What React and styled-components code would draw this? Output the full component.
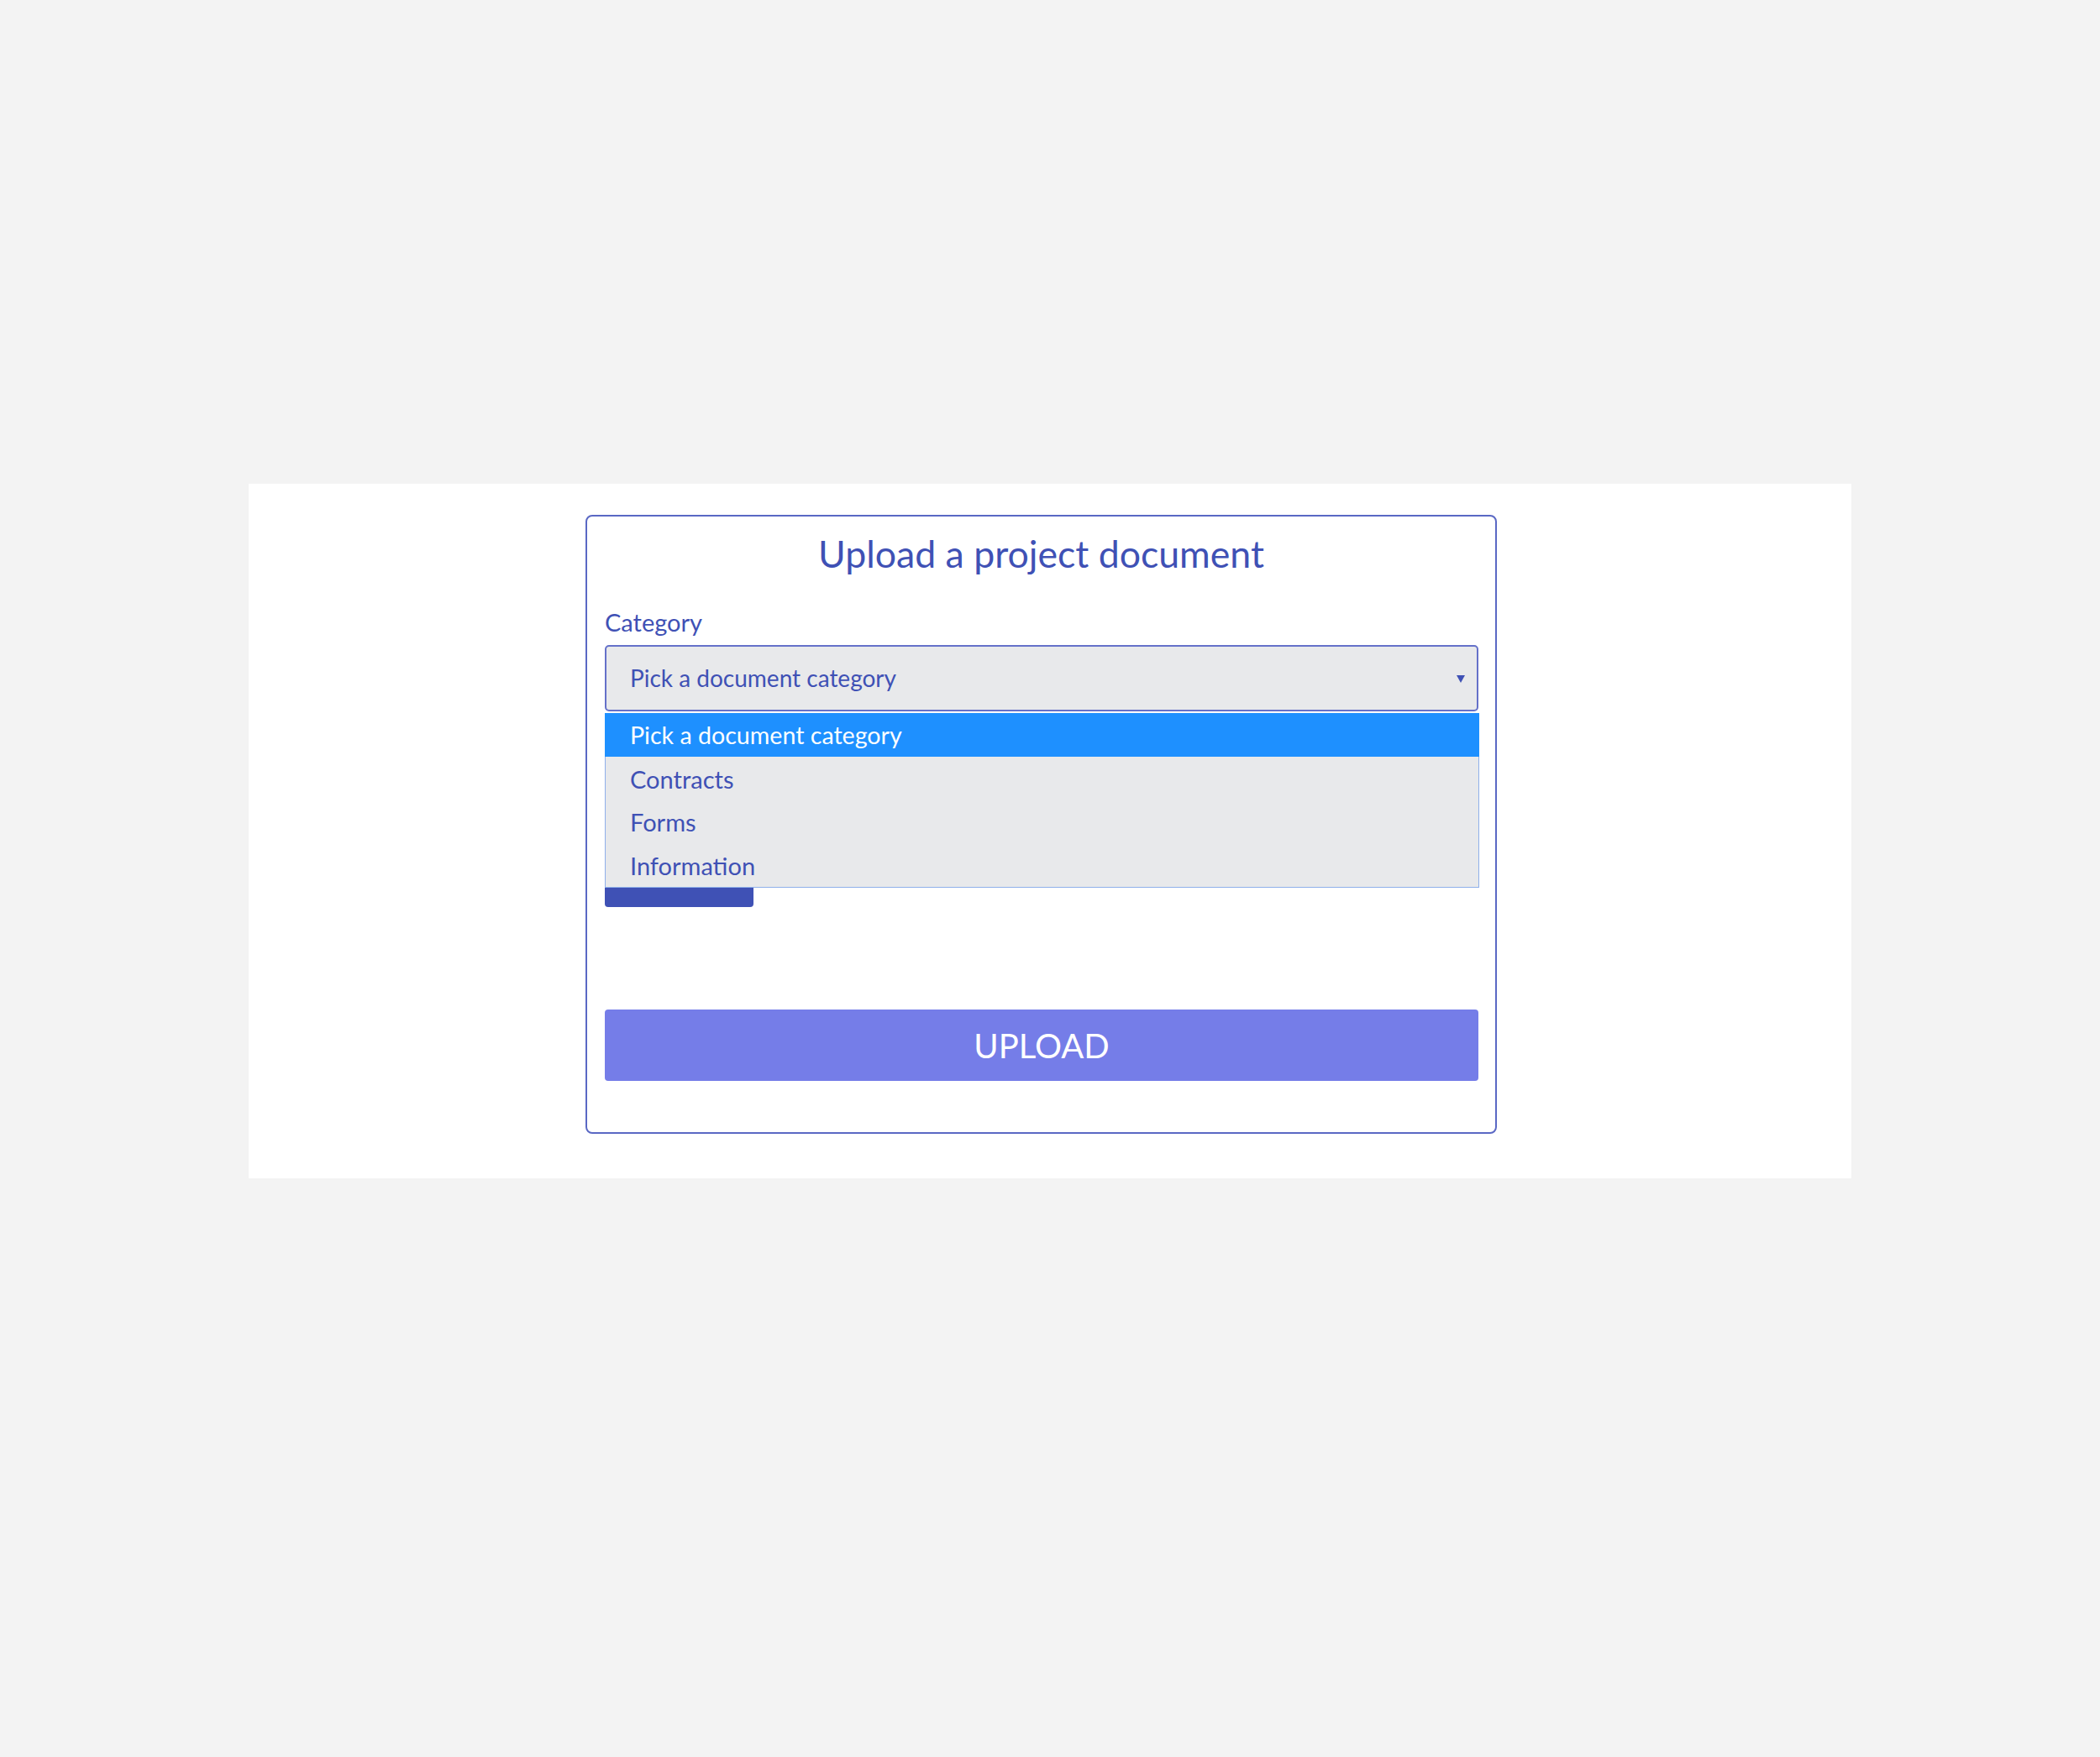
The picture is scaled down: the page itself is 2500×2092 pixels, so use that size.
import React from "react";
import styled, { createGlobalStyle } from "styled-components";

const Global = createGlobalStyle`
  html, body { margin: 0; padding: 0; }
  body {
    background: #f3f3f3;
    font-family: Lato, "Open Sans", sans-serif;
    width: 2500px;
    height: 2092px;
  }
`;

const Page = styled.div`
  padding: 576px 296px 0 296px;
`;

const Panel = styled.section`
  background: #ffffff;
  height: 827px;
  box-sizing: border-box;
  padding: 37px 422px 53px 401px;
`;

const Card = styled.form`
  box-sizing: border-box;
  width: 1085px;
  height: 737px;
  border: 2px solid #5a68c4;
  border-radius: 8px;
  padding: 16px 21px 0 21px;
  display: flex;
  flex-direction: column;
`;

const Title = styled.h1`
  margin: 0;
  font-size: 44.6px;
  font-weight: 400;
  line-height: 55px;
  color: #3f51b5;
  text-align: center;
`;

const Label = styled.label`
  margin-top: 37px;
  font-size: 29px;
  line-height: 35px;
  color: #3f51b5;
`;

const SelectWrap = styled.div`
  position: relative;
  margin-top: 10px;
`;

const SelectBox = styled.div`
  box-sizing: border-box;
  height: 79px;
  width: 1040px;
  background: #e8e9eb;
  border: 2px solid #6571c9;
  border-radius: 5px;
  display: flex;
  align-items: center;
  justify-content: space-between;
  padding: 0 14px 0 28px;
  font-size: 28px;
  line-height: 35px;
  color: #3f51b5;
`;

const Arrow = styled.span`
  width: 0;
  height: 0;
  border-left: 5px solid transparent;
  border-right: 5px solid transparent;
  border-top: 9px solid #3f51b5;
  margin-top: 2px;
`;

const Menu = styled.ul`
  position: absolute;
  top: 81px;
  left: 0;
  width: 1041px;
  box-sizing: border-box;
  margin: 0;
  padding: 0;
  list-style: none;
  background: #e8e9eb;
  border: 1px solid #8fb0ea;
  border-top: none;
  z-index: 2;
`;

const Option = styled.li`
  height: 51.75px;
  box-sizing: border-box;
  display: flex;
  align-items: center;
  padding: 1px 0 0 30px;
  font-size: ${(p) => (p.$active ? "28.6px" : "29px")};
  line-height: 35px;
  color: ${(p) => (p.$active ? "#ffffff" : "#3f51b5")};
  background: ${(p) => (p.$active ? "#1e90ff" : "transparent")};
  margin: 0 -1px;
`;

const FileButton = styled.button`
  margin-top: 181px;
  width: 177px;
  height: 52px;
  border: none;
  border-radius: 4px;
  background: #3f51b5;
  font-family: Lato, sans-serif;
`;

const UploadButton = styled.button`
  margin-top: 122px;
  width: 1040px;
  height: 85px;
  border: none;
  border-radius: 4px;
  background: #757de8;
  color: #ffffff;
  font-family: Lato, "Open Sans", sans-serif;
  font-size: 40px;
  font-weight: 400;
  display: flex;
  align-items: center;
  justify-content: center;
  padding: 0;
`;

const options = ["Pick a document category", "Contracts", "Forms", "Information"];

export default function App() {
  return (
    <>
      <Global />
      <Page>
        <Panel>
          <Card onSubmit={(e) => e.preventDefault()}>
            <Title>Upload a project document</Title>
            <Label>Category</Label>
            <SelectWrap>
              <SelectBox>
                <span>Pick a document category</span>
                <Arrow />
              </SelectBox>
              <Menu>
                {options.map((o, i) => (
                  <Option key={o} $active={i === 0}>
                    {o}
                  </Option>
                ))}
              </Menu>
            </SelectWrap>
            <FileButton type="button" aria-label="Choose file" />
            <UploadButton type="submit">UPLOAD</UploadButton>
          </Card>
        </Panel>
      </Page>
    </>
  );
}
